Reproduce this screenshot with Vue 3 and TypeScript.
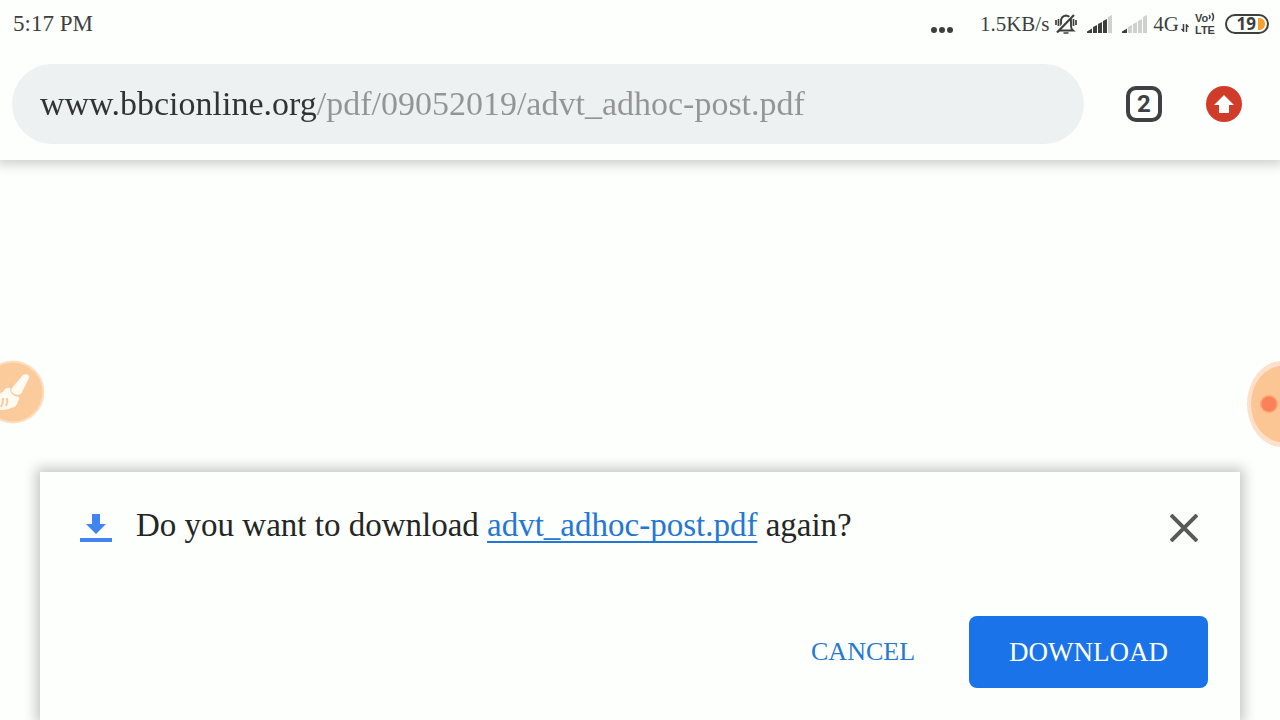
<script setup lang="ts">
import { ref } from 'vue'

const url = ref('www.bbcionline.org/pdf/09052019/advt_adhoc-post.pdf')
const fileName = 'advt_adhoc-post.pdf'
const tabCount = 2
const battery = 19
const signals = [4, 1]
const bars = [
  { x: 0, y: 14 },
  { x: 6, y: 10 },
  { x: 11, y: 7 },
  { x: 16, y: 4 },
  { x: 21, y: 0 },
]
</script>

<template>
  <div class="page">
    <header class="top">
      <div class="status">
        <time class="time">5:17 PM</time>
        <svg class="dots" width="24" height="8" viewBox="0 0 24 8" fill="#3c3f3e">
          <circle cx="4" cy="4" r="3" /><circle cx="12" cy="4" r="3" /><circle cx="20" cy="4" r="3" />
        </svg>
        <span class="speed">1.5KB/s</span>
        <svg class="bell" width="22" height="20" viewBox="0 0 22 20" fill="none" stroke="#3c3f3e" stroke-width="1.9">
          <path d="M4 16.500H18Q16 15 16 12V7.500Q16 2 11 1.500Q6 2 6 7.500V12Q6 15 4 16.500" />
          <path d="M1 6v5M3.500 5v7M21 6v5M18.500 5v7M8.500 19h5" stroke-width="1.700" />
          <path d="M18 .5 1 17.500" stroke="#fdfffc" stroke-width="2" />
          <path d="M19 1 2 18.500" stroke-width="2.200" />
        </svg>
        <svg
          v-for="level in signals"
          :key="level"
          class="signal"
          width="26"
          height="19"
          viewBox="0 0 26 19"
        >
          <path
            v-for="(bar, i) in bars"
            :key="bar.x"
            :d="i === 0 ? 'M0 18V16.500L5 13.500V18Z' : `M${bar.x} ${bar.y + 2}L${bar.x + 4} ${bar.y}V18H${bar.x}Z`"
            :fill="i < level ? '#3c3f3e' : '#cfd1cf'"
          />
        </svg>
        <span class="network">4G</span>
        <svg class="updown" width="8" height="8" viewBox="0 0 8 8" fill="none" stroke="#3c3f3e" stroke-width="1.500">
          <path d="M2.500 0v7L.5 5M5.500 8V1l2 2" />
        </svg>
        <span class="volte">
          <span class="vo">Vo<svg width="7" height="10" viewBox="0 0 7 10" fill="none" stroke="#3c3f3e" stroke-width="1.500"><path d="M1 3q2 2 0 4M4 1q3 4 0 8" /></svg></span>
          <span>LTE</span>
        </span>
        <span class="battery">
          <span>{{ battery }}</span>
          <svg width="8" height="14" viewBox="0 0 8 14"><path d="M0 1H2Q7 2 7 7T2 13H0Z" fill="#f5a12c" /></svg>
        </span>
      </div>
      <div class="toolbar">
        <label class="omnibox">
          <input v-model="url" class="url" type="text" aria-label="Address" spellcheck="false" />
        </label>
        <button class="tabs" type="button" aria-label="Open tabs">{{ tabCount }}</button>
        <button class="update" type="button" aria-label="Update available">
          <svg width="36" height="36" viewBox="0 0 36 36">
            <circle cx="18" cy="18" r="18" fill="#d13b2a" />
            <path d="M18 9 28 19H23V27H13V19H8Z" fill="#fff" />
          </svg>
        </button>
      </div>
    </header>

    <main class="content"></main>

    <button class="float brush" type="button" aria-label="Draw">
      <svg width="45" height="64" viewBox="0 0 45 64">
        <circle cx="13" cy="32" r="31.500" fill="#fde0c4" />
        <circle cx="13" cy="32" r="29.500" fill="#fccb9b" />
        <path d="M22 16Q24 13 28 15Q30 16 29 18L21 34Q16 36 13 33Q10 31 12 28Z" fill="#fffaf2" />
        <path d="M10 28Q10 36 19 37Q20 39 18 41Q17 47 11 48Q7 50 0 50V33Q3 33 4 30Q7 27 10 28Z" fill="#fffaf2" />
        <path d="M1 47Q3 43 3 38M6 46Q8 42 7 38" fill="none" stroke="#fccb9b" stroke-width="2" />
      </svg>
    </button>
    <button class="float record" type="button" aria-label="Recorder">
      <svg width="33" height="86" viewBox="0 0 33 86">
        <ellipse cx="35" cy="43" rx="35" ry="43" fill="#fde0cb" />
        <ellipse cx="35" cy="43" rx="31" ry="38" fill="#fcc594" />
        <circle cx="22" cy="43" r="9" fill="#fca577" />
        <circle cx="22" cy="43" r="7.500" fill="#fb8158" />
      </svg>
    </button>

    <section class="sheet" role="dialog" aria-labelledby="question">
      <div class="message">
        <svg class="download-icon" width="32" height="28" viewBox="0 0 32 28" fill="#4184f0">
          <path d="M12 0H20V10H26L16 20 6 10H12ZM0 24H32V28H0Z" />
        </svg>
        <p id="question">Do you want to download <a href="#">{{ fileName }}</a> again?</p>
        <button class="close" type="button" aria-label="Close">
          <svg width="28" height="28" viewBox="0 0 28 28" stroke="#585a59" stroke-width="4">
            <path d="M1 1 27 27M27 1 1 27" />
          </svg>
        </button>
      </div>
      <div class="actions">
        <button class="cancel" type="button">CANCEL</button>
        <button class="download" type="button">DOWNLOAD</button>
      </div>
    </section>
  </div>
</template>

<style>
body {
  margin: 0;
  background: #fdfffc;
}
</style>

<style scoped>
.page {
  position: relative;
  display: flex;
  flex-direction: column;
  min-height: 100vh;
  overflow: hidden;
  background: #fdfffc;
  color: #242625;
  font-family: 'Liberation Serif', serif;
}
* {
  box-sizing: border-box;
}
button {
  padding: 0;
  border: 0;
  background: none;
  font-family: inherit;
  cursor: pointer;
}
svg {
  display: block;
  flex: none;
}
.top {
  box-shadow: 0 0 12px 4px rgba(0, 0, 0, 0.2);
  background: #fdfffc;
}
.status {
  display: flex;
  align-items: center;
  height: 48px;
  padding: 0 11px 0 13px;
  color: #3c3f3e;
  font-size: 21px;
}
.time {
  margin-right: auto;
  font-size: 23px;
}
.dots {
  margin: 12px 26px 0 0;
}
.bell {
  margin: 0 10px 0 6px;
}
.signal {
  margin-right: 9px;
}
.network {
  margin-left: -4px;
}
.updown {
  margin: 8px 6px 0 2px;
}
.volte {
  display: flex;
  flex-direction: column;
  width: 22px;
  margin-right: 8px;
  font: 700 11px/12px 'Liberation Sans', sans-serif;
}
.vo {
  display: flex;
}
.battery {
  display: flex;
  align-items: center;
  justify-content: flex-end;
  gap: 2px;
  width: 44px;
  height: 20px;
  padding-right: 1px;
  border: 2px solid #3c3f3e;
  border-radius: 10px;
  font: 700 17px/16px 'Open Sans', sans-serif;
}
.toolbar {
  display: flex;
  align-items: center;
  height: 112px;
  padding: 0 38px 0 12px;
}
.omnibox {
  flex: 1;
  display: flex;
  align-items: center;
  height: 80px;
  padding: 0 28px;
  border-radius: 40px;
  background: #eef1f1;
}
.url {
  width: 100%;
  height: 48px;
  padding: 0;
  border: 0;
  outline: 0;
  background: linear-gradient(90deg, #303332 277px, #929594 277px);
  -webkit-background-clip: text;
  background-clip: text;
  -webkit-text-fill-color: transparent;
  caret-color: #303332;
  font: 34px 'Liberation Serif', serif;
}
.tabs {
  width: 36px;
  height: 36px;
  margin: 0 44px 0 42px;
  border: 4px solid #3d4144;
  border-radius: 10px;
  color: #3d4144;
  font: 700 24px/28px Roboto, sans-serif;
}
.content {
  flex: 1;
}
.float {
  position: absolute;
}
.brush {
  top: 360px;
  left: 0;
}
.record {
  top: 361px;
  right: 0;
}
.sheet {
  height: 248px;
  margin: 0 40px;
  padding: 24px 32px 32px 40px;
  background: #fdfffc;
  box-shadow: 0 0 12px 4px rgba(0, 0, 0, 0.22);
}
.message {
  display: flex;
  align-items: center;
  height: 64px;
}
.download-icon {
  margin: 0 24px 0 0;
}
.message p {
  flex: 1;
  margin: 0 0 6px;
  font-size: 33px;
  line-height: 40px;
}
.message a {
  color: #2577d4;
  text-decoration-thickness: 2px;
  text-underline-offset: 5px;
  text-decoration-skip-ink: none;
}
.close {
  margin-right: 10px;
}
.actions {
  display: flex;
  justify-content: flex-end;
  gap: 16px;
  margin-top: 56px;
}
.actions button {
  height: 72px;
  padding: 0 40px;
  border-radius: 8px;
  font-size: 27px;
}
.actions .cancel {
  padding: 0 38px;
  color: #2577d4;
  font-size: 26px;
}
.download {
  background: #1a73e8;
  color: #fdfffc;
}
</style>
